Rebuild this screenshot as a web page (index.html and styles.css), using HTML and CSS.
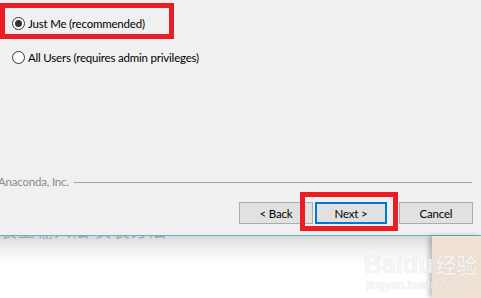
FILE: index.html
```html
<!DOCTYPE html>
<html>
<head>
<meta charset="utf-8">
<link rel="stylesheet" href="styles.css">
</head>
<body>
<div class="page">
  <div class="dialog">
    <div class="options">
      <label class="option"><span class="radio checked"></span><span class="label">Just Me (recommended)</span></label>
      <label class="option"><span class="radio"></span><span class="label">All Users (requires admin privileges)</span></label>
    </div>
    <div class="spacer"></div>
    <div class="brand"><span class="brand-name">Anaconda, Inc.</span><span class="rule"></span></div>
    <div class="buttons">
      <button class="btn">&lt; Back</button>
      <button class="btn primary">Next &gt;</button>
      <button class="btn cancel">Cancel</button>
    </div>
  </div>
  <div class="below">
    <div class="article"><div class="article-title">装上输入法 安装方法</div></div>
    <div class="side"></div>
  </div>
  <div class="mark mark-1"></div>
  <div class="mark mark-2"></div>
  <div class="watermark">
    <div class="wm-logo"><span>Bai</span><span class="paw">du</span><span class="wm-cn">经验</span></div>
    <div class="wm-url">jingyan.baidu.com</div>
  </div>
</div>
</body>
</html>
```
FILE: styles.css
```css
html, body {
  margin: 0;
  padding: 0;
  background: #ffffff;
}
.page {
  position: relative;
  width: 481px;
  height: 298px;
  overflow: hidden;
  display: flex;
  flex-direction: column;
  font-family: Lato, "Liberation Sans", sans-serif;
  font-size: 11.5px;
  letter-spacing: -0.2px;
  color: #000;
}
.dialog {
  height: 235px;
  background: #f0f0f0;
  border-bottom: 1px solid #5db6c8;
  display: flex;
  flex-direction: column;
}
.options {
  display: flex;
  flex-direction: column;
  gap: 17px;
  padding: 15px 0 0 12px;
}
.option {
  display: flex;
  align-items: center;
  gap: 3px;
  height: 17px;
}
.radio {
  width: 11px;
  height: 11px;
  border: 1px solid #333;
  border-radius: 50%;
  background: #fff;
  display: flex;
  align-items: center;
  justify-content: center;
}
.radio.checked::after {
  content: "";
  width: 7px;
  height: 7px;
  border-radius: 50%;
  background: #333;
}
.label {
  line-height: 17px;
}
.spacer {
  flex: 1;
}
.brand {
  display: flex;
  align-items: center;
  margin-left: -2px;
  margin-right: 9px;
  gap: 5px;
  color: #8a8a8a;
  height: 16px;
}
.rule {
  flex: 1;
  height: 1px;
  background: #a0a0a0;
  margin-top: 2px;
}
.buttons {
  display: flex;
  justify-content: flex-end;
  padding: 13px 8px 11px 0;
}
.btn {
  width: 74px;
  height: 22px;
  box-sizing: border-box;
  background: #e1e1e1;
  border: 1px solid #adadad;
  font: inherit;
  letter-spacing: inherit;
  color: #000;
  padding: 0;
  margin: 0;
}
.btn.primary {
  width: 72px;
  border: 2px solid #0078d7;
  margin-left: 2px;
}
.btn.cancel {
  margin-left: 12px;
}
.below {
  flex: 1;
  display: flex;
}
.article {
  flex: 1;
  overflow: hidden;
  background: linear-gradient(#d9d9d9, #f2f2f2 14px, #ffffff 30px);
}
.article-title {
  margin-top: -16px;
  font-family: "Noto Sans CJK SC", sans-serif;
  font-size: 17px;
  line-height: 20px;
  color: #a3a3a3;
  letter-spacing: 1px;
}
.side {
  width: 49px;
  background: #efe1d4;
  box-shadow: -3px 0 5px rgba(0, 0, 0, 0.25);
}
.mark {
  position: absolute;
  border: 5px solid #ec1c24;
  box-sizing: border-box;
}
.mark-1 {
  left: 0;
  top: 3px;
  width: 174px;
  height: 36px;
}
.mark-2 {
  left: 300px;
  top: 192px;
  width: 98px;
  height: 39px;
}
.watermark {
  position: absolute;
  left: 364px;
  top: 250px;
  color: rgba(255, 255, 255, 0.8);
  text-shadow: 0 0 1px rgba(0, 0, 0, 0.18);
  font-family: "Liberation Sans", sans-serif;
  letter-spacing: 0;
}
.wm-logo {
  display: flex;
  align-items: flex-end;
  font-size: 25px;
  font-weight: bold;
  line-height: 28px;
}
.wm-cn {
  font-family: "Noto Sans CJK SC", sans-serif;
  font-size: 21px;
  margin-left: 2px;
}
.wm-url {
  font-size: 12px;
  line-height: 14px;
  margin-left: 2px;
}
```
